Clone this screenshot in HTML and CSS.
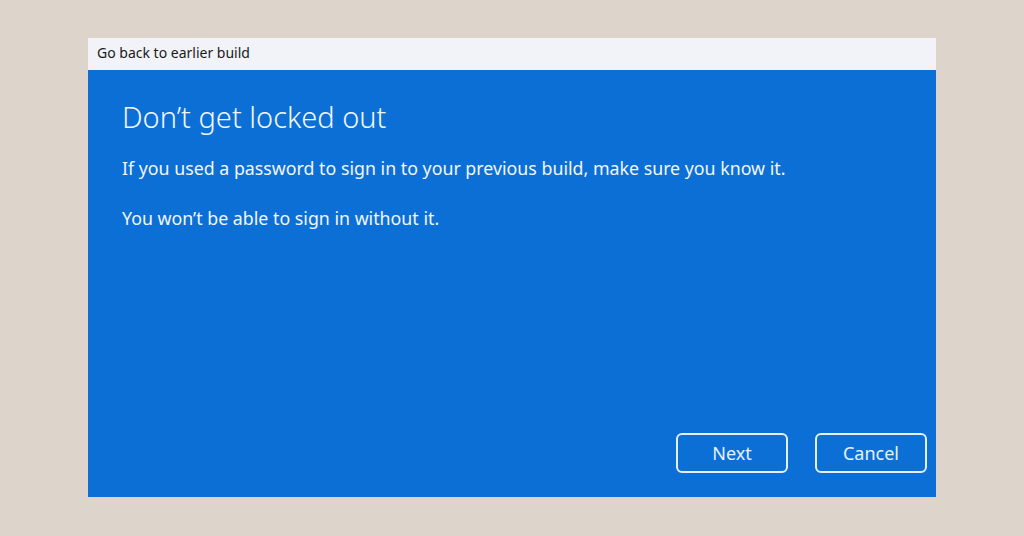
FILE: index.html
```html
<!DOCTYPE html>
<html lang="en">
<head>
  <meta charset="UTF-8">
  <title>Go back to earlier build</title>
  <link rel="stylesheet" href="styles.css">
</head>
<body>
  <!-- Janela de recuperação -->
  <div class="window">
    <div class="title-bar">Go back to earlier build</div>

    <div class="content">
      <h1 class="heading">Don’t get locked out</h1>
      <p class="text">If you used a password to sign in to your previous build, make sure you know it.</p>
      <p class="text">You won’t be able to sign in without it.</p>

      <div class="button-group">
        <button class="btn">Next</button>
        <button class="btn">Cancel</button>
      </div>
    </div>
  </div>
</body>
</html>
```

FILE: styles.css
```css
* {
  margin: 0;
  padding: 0;
  box-sizing: border-box;
}

html, body {
  height: 100%;
  font-family: 'Noto Sans', 'Open Sans', sans-serif;
  overflow: hidden;
  background: #ddd5cb;
}

body {
  padding: 38px 88px 39px 88px;
}

.window {
  height: 100%;
  display: flex;
  flex-direction: column;
}

.title-bar {
  height: 32px;
  background: #f1f3f8;
  color: #1a1a1a;
  font-size: 14px;
  padding: 5px 0 0 9px;
}

.content {
  flex: 1;
  background: #0b6fd6;
  color: #f2f6fb;
  display: flex;
  flex-direction: column;
  padding: 27px 9px 24px 34px;
}

.heading {
  font-size: 29px;
  font-weight: 300;
  margin-bottom: 20px;
}

.text {
  font-size: 17.8px;
  margin-bottom: 26px;
}

.button-group {
  margin-top: auto;
  display: flex;
  justify-content: flex-end;
  gap: 27px;
}

.btn {
  width: 112px;
  height: 40px;
  background: transparent;
  color: #e8f1fb;
  border: 2px solid #e6eef8;
  border-radius: 6px;
  font-family: inherit;
  font-size: 18px;
}
```
